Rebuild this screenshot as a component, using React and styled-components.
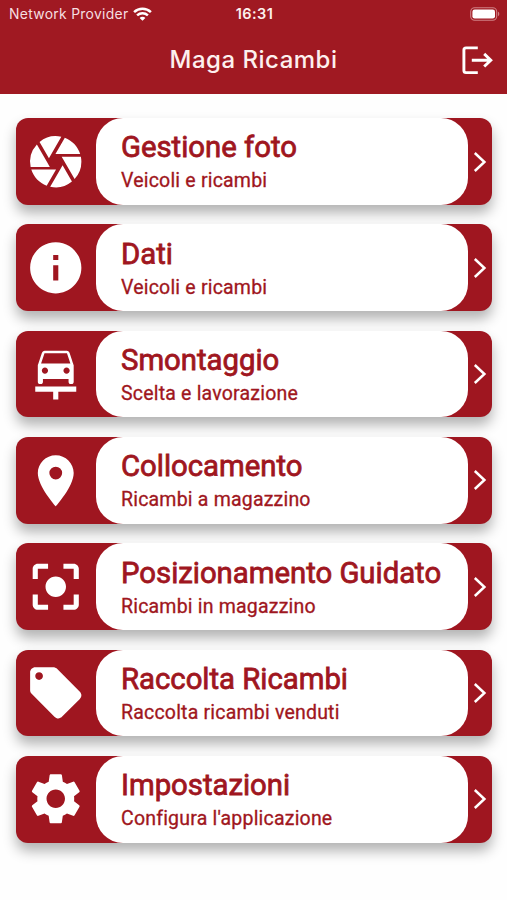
import React from "react";
import styled, { createGlobalStyle } from "styled-components";
import {
  MdCamera,
  MdInfo,
  MdCarRepair,
  MdPlace,
  MdCenterFocusStrong,
  MdLocalOffer,
  MdSettings,
} from "react-icons/md";

const GlobalStyle = createGlobalStyle`
  * {
    box-sizing: border-box;
  }

  body {
    margin: 0;
    background-color: #fefefe;
  }
`;

const MainWrapper = styled.main`
  width: 507px;
  height: 900px;
  overflow: hidden;
  background-color: #fefefe;
  font-family: Roboto, sans-serif;
`;

const Header = styled.header`
  height: 93.5px;
  background-color: #a01922;
  color: #fff;
  font-family: Inter, sans-serif;
`;

const StatusBar = styled.div`
  height: 27px;
  padding: 0 7px 0 9px;
  display: grid;
  grid-template-columns: 1fr auto 1fr;
  align-items: center;
`;

const Carrier = styled.div`
  display: flex;
  align-items: center;
  gap: 5px;
  font-size: 13.9px;
  letter-spacing: 0.3px;
  color: #f6dfe0;
`;

const Clock = styled.div`
  font-size: 14.5px;
  font-weight: 600;
  letter-spacing: 0.4px;
  color: #fdf0ee;
`;

const BatteryIcon = styled.svg`
  justify-self: end;
`;

const NavBar = styled.div`
  height: 65px;
  padding: 0 13px;
  display: grid;
  grid-template-columns: 1fr auto 1fr;
  align-items: center;
`;

const PageTitle = styled.h1`
  grid-column: 2;
  margin: 0;
  font-size: 24px;
  font-weight: 500;
  letter-spacing: 0.5px;
  color: #fdf0ee;
`;

const LogoutButton = styled.button`
  justify-self: end;
  display: flex;
  padding: 0;
  border: none;
  background: none;
  cursor: pointer;
`;

const Menu = styled.nav`
  display: flex;
  flex-direction: column;
  gap: 19.6px;
  padding: 24.7px 15px 0 15.5px;
`;

const Card = styled.a`
  display: flex;
  height: 86.7px;
  border-radius: 12px;
  background-color: #9f1620;
  color: #9f1620;
  box-shadow: 0 8px 13px rgba(0, 0, 0, 0.3);
  cursor: pointer;
`;

const IconBox = styled.div`
  width: 80.5px;
  display: flex;
  align-items: center;
  justify-content: center;
  font-size: 61.5px;
  color: #fff;
`;

const Content = styled.div`
  flex: 1;
  display: flex;
  flex-direction: column;
  padding: 11.2px 0 0 25px;
  border-radius: 27px;
  background-color: #fff;
  white-space: nowrap;
`;

const CardTitle = styled.span`
  font-size: 29.3px;
  line-height: 36px;
  -webkit-text-stroke: 0.8px #9f1620;
`;

const CardText = styled.span`
  margin-top: 4px;
  font-size: 19.5px;
  line-height: 24px;
  letter-spacing: 0.2px;
  -webkit-text-stroke: 0.3px #9f1620;
`;

const ArrowBox = styled.div`
  width: 24.5px;
  display: flex;
  align-items: center;
  justify-content: center;
`;

const items = [
  { title: "Gestione foto", text: "Veicoli e ricambi", icon: MdCamera },
  { title: "Dati", text: "Veicoli e ricambi", icon: MdInfo },
  { title: "Smontaggio", text: "Scelta e lavorazione", icon: MdCarRepair },
  { title: "Collocamento", text: "Ricambi a magazzino", icon: MdPlace },
  { title: "Posizionamento Guidato", text: "Ricambi in magazzino", icon: MdCenterFocusStrong },
  { title: "Raccolta Ricambi", text: "Raccolta ricambi venduti", icon: MdLocalOffer },
  { title: "Impostazioni", text: "Configura l'applicazione", icon: MdSettings },
];

function Wifi() {
  return (
    <svg width="19" height="14" viewBox="0 0 19 14" fill="none" stroke="#fff" strokeWidth="2.5">
      <path d="M1.1 5.2C5.8 .7 13.2 .7 17.9 5.2" />
      <path d="M4.1 8.3C7.1 5.5 11.9 5.5 14.9 8.3" />
      <path d="M9.5 13.8L6.6 10.9C8.2 9.5 10.8 9.5 12.4 10.9Z" fill="#fff" stroke="none" />
    </svg>
  );
}

function Battery() {
  return (
    <BatteryIcon width="30" height="14" viewBox="0 0 30 14">
      <rect x="0.7" y="0.7" width="26" height="12.6" rx="4" fill="none" stroke="#cf8085" strokeWidth="1.1" />
      <rect x="2.4" y="2.4" width="22.6" height="9.2" rx="2.3" fill="#fff" />
      <path d="M28 4.8C29.7 5.4 29.7 8.6 28 9.2Z" fill="#cf8085" />
    </BatteryIcon>
  );
}

function Logout() {
  return (
    <svg width="32" height="30" viewBox="0 0 32 30" fill="none" stroke="#fff" strokeWidth="2.9">
      <path d="M15.8 2.9H4Q1.9 2.9 1.9 5V25.5Q1.9 27.6 4 27.6H15.8" />
      <path d="M9.8 15.2H29M22.2 8.9L28.8 15.2L22.2 21.5" />
    </svg>
  );
}

function Arrow() {
  return (
    <svg width="14" height="22" viewBox="0 0 14 22" fill="none" stroke="#fff" strokeWidth="2.5">
      <path d="M1.8 2L11.4 11L1.8 20" />
    </svg>
  );
}

function App() {
  return (
    <MainWrapper>
      <GlobalStyle />
      <Header>
        <StatusBar>
          <Carrier>
            Network Provider
            <Wifi />
          </Carrier>
          <Clock>16:31</Clock>
          <Battery />
        </StatusBar>
        <NavBar>
          <PageTitle>Maga Ricambi</PageTitle>
          <LogoutButton aria-label="Esci">
            <Logout />
          </LogoutButton>
        </NavBar>
      </Header>

      <Menu>
        {items.map(({ title, text, icon: Icon }) => (
          <Card key={title}>
            <IconBox>
              <Icon />
            </IconBox>
            <Content>
              <CardTitle>{title}</CardTitle>
              <CardText>{text}</CardText>
            </Content>
            <ArrowBox>
              <Arrow />
            </ArrowBox>
          </Card>
        ))}
      </Menu>
    </MainWrapper>
  );
}

export default App;
